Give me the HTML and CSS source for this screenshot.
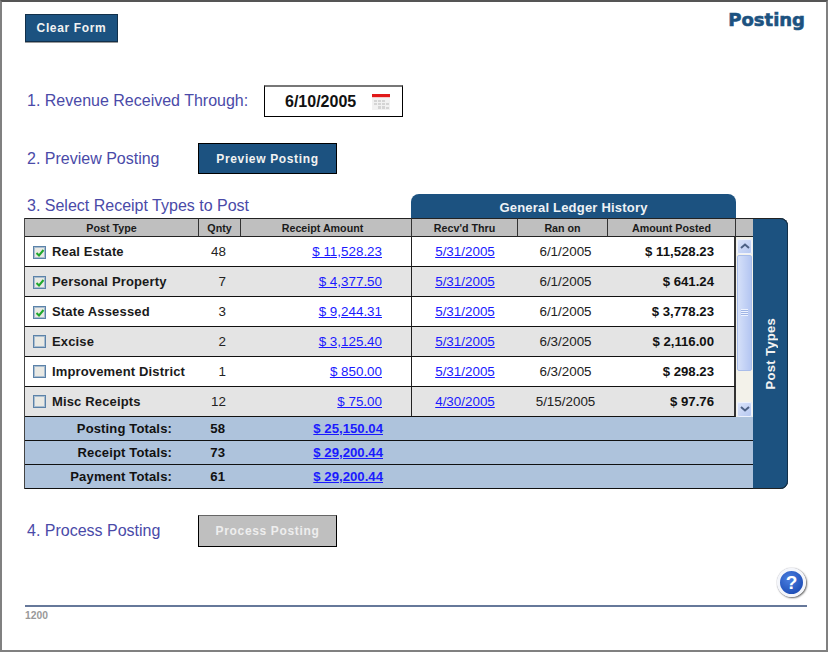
FILE: index.html
```html
<!DOCTYPE html>
<html lang="en">
<head>
    <meta charset="UTF-8">
    <title>Posting</title>
    <link rel="stylesheet" href="styles.css">
</head>
<body>
<div class="frame">
    <div class="topbar">
        <button class="btn btn-clear">Clear Form</button>
        <h1 class="page-title">Posting</h1>
    </div>

    <div class="step step-1">
        <div class="step-label label-wide">1. Revenue Received Through:</div>
        <div class="date-box">
            <span class="date-value">6/10/2005</span>
            <svg class="cal-icon" width="18" height="16" viewBox="0 0 18 16">
                <rect x="0" y="0" width="18" height="16" fill="#f1f1f1"/>
                <rect x="0" y="0" width="18" height="3" fill="#e01818"/>
                <rect x="0" y="3" width="18" height="1" fill="#f8c8c8"/>
                <g fill="#d4d4d4">
                    <rect x="2" y="6" width="3" height="2"/>
                    <rect x="6" y="6" width="3" height="2"/>
                    <rect x="10" y="6" width="3" height="2"/>
                    <rect x="2" y="9" width="3" height="2"/>
                    <rect x="6" y="9" width="3" height="2"/>
                    <rect x="10" y="9" width="3" height="2"/>
                    <rect x="14" y="9" width="3" height="2"/>
                    <rect x="6" y="12" width="3" height="3"/>
                    <rect x="10" y="12" width="3" height="3"/>
                    <rect x="14" y="13" width="3" height="2"/>
                </g>
            </svg>
        </div>
    </div>

    <div class="step step-2">
        <div class="step-label">2. Preview Posting</div>
        <button class="btn btn-step">Preview Posting</button>
    </div>

    <div class="step step-3">
        <div class="step-label label-select">3. Select Receipt Types to Post</div>
        <div class="ledger-tab">General Ledger History</div>
    </div>

    <div class="grid-wrap">
        <table class="posting-table">
            <colgroup>
                <col class="c-type"><col class="c-qnty"><col class="c-amount">
                <col class="c-recv"><col class="c-ran"><col class="c-posted"><col class="c-scroll">
            </colgroup>
            <thead>
                <tr>
                    <th>Post Type</th>
                    <th>Qnty</th>
                    <th class="th-amount">Receipt Amount</th>
                    <th>Recv'd Thru</th>
                    <th>Ran on</th>
                    <th>Amount Posted</th>
                    <th class="th-scroll"></th>
                </tr>
            </thead>
            <tbody>
                <tr>
                    <td class="type"><span class="check on"><svg width="10" height="10" viewBox="0 0 10 10"><path d="M1.5 5 L4 7.5 L8.5 2" fill="none" stroke="#1fa82c" stroke-width="2"/></svg></span>Real Estate</td>
                    <td class="qnty">48</td>
                    <td class="amount"><a href="#">$ 11,528.23</a></td>
                    <td class="recv"><a href="#">5/31/2005</a></td>
                    <td class="ran">6/1/2005</td>
                    <td class="posted">$ 11,528.23</td>
                    <td class="scroll-cell" rowspan="6">
                        <div class="scrollbar">
                            <div class="sb-btn"><svg width="10" height="6" viewBox="0 0 10 6"><path d="M1 5 L5 1.5 L9 5" fill="none" stroke="#4d6185" stroke-width="2"/></svg></div>
                            <div class="sb-thumb"><span class="sb-grip"></span></div>
                            <div class="sb-track"></div>
                            <div class="sb-btn"><svg width="10" height="6" viewBox="0 0 10 6"><path d="M1 1 L5 4.5 L9 1" fill="none" stroke="#4d6185" stroke-width="2"/></svg></div>
                        </div>
                    </td>
                </tr>
                <tr class="alt">
                    <td class="type"><span class="check on"><svg width="10" height="10" viewBox="0 0 10 10"><path d="M1.5 5 L4 7.5 L8.5 2" fill="none" stroke="#1fa82c" stroke-width="2"/></svg></span>Personal Property</td>
                    <td class="qnty">7</td>
                    <td class="amount"><a href="#">$ 4,377.50</a></td>
                    <td class="recv"><a href="#">5/31/2005</a></td>
                    <td class="ran">6/1/2005</td>
                    <td class="posted">$ 641.24</td>
                </tr>
                <tr>
                    <td class="type"><span class="check on"><svg width="10" height="10" viewBox="0 0 10 10"><path d="M1.5 5 L4 7.5 L8.5 2" fill="none" stroke="#1fa82c" stroke-width="2"/></svg></span>State Assessed</td>
                    <td class="qnty">3</td>
                    <td class="amount"><a href="#">$ 9,244.31</a></td>
                    <td class="recv"><a href="#">5/31/2005</a></td>
                    <td class="ran">6/1/2005</td>
                    <td class="posted">$ 3,778.23</td>
                </tr>
                <tr class="alt">
                    <td class="type"><span class="check"></span>Excise</td>
                    <td class="qnty">2</td>
                    <td class="amount"><a href="#">$ 3,125.40</a></td>
                    <td class="recv"><a href="#">5/31/2005</a></td>
                    <td class="ran">6/3/2005</td>
                    <td class="posted">$ 2,116.00</td>
                </tr>
                <tr>
                    <td class="type"><span class="check"></span>Improvement District</td>
                    <td class="qnty">1</td>
                    <td class="amount"><a href="#">$ 850.00</a></td>
                    <td class="recv"><a href="#">5/31/2005</a></td>
                    <td class="ran">6/3/2005</td>
                    <td class="posted">$ 298.23</td>
                </tr>
                <tr class="alt">
                    <td class="type"><span class="check"></span>Misc Receipts</td>
                    <td class="qnty">12</td>
                    <td class="amount"><a href="#">$ 75.00</a></td>
                    <td class="recv"><a href="#">4/30/2005</a></td>
                    <td class="ran">5/15/2005</td>
                    <td class="posted">$ 97.76</td>
                </tr>
            </tbody>
            <tfoot>
                <tr>
                    <td class="total-label">Posting Totals:</td>
                    <td class="total-qnty">58</td>
                    <td class="total-amount"><a href="#">$ 25,150.04</a></td>
                    <td colspan="4"></td>
                </tr>
                <tr>
                    <td class="total-label">Receipt Totals:</td>
                    <td class="total-qnty">73</td>
                    <td class="total-amount"><a href="#">$ 29,200.44</a></td>
                    <td colspan="4"></td>
                </tr>
                <tr>
                    <td class="total-label">Payment Totals:</td>
                    <td class="total-qnty">61</td>
                    <td class="total-amount"><a href="#">$ 29,200.44</a></td>
                    <td colspan="4"></td>
                </tr>
            </tfoot>
        </table>
        <div class="side-tab"><span>Post Types</span></div>
    </div>

    <div class="step step-4">
        <div class="step-label">4. Process Posting</div>
        <button class="btn btn-step btn-off">Process Posting</button>
    </div>

    <div class="help-row">
        <div class="help">?</div>
    </div>
    <div class="footer">1200</div>
</div>
</body>
</html>
```

FILE: styles.css
```css
body {
    margin: 0;
    font-family: "Liberation Sans", Arial, sans-serif;
    background: #fff;
}

.frame {
    box-sizing: border-box;
    width: 828px;
    height: 652px;
    padding: 12px 19px 0 22px;
    border: 2px solid #808080;
    border-top-color: #555;
    background: #fff;
    overflow: hidden;
}

.topbar {
    display: flex;
    justify-content: space-between;
    align-items: flex-start;
    height: 28px;
    margin-left: 1px;
}

.page-title {
    margin: -5px 2px 0 0;
    font-family: "DejaVu Sans", Verdana, sans-serif;
    font-size: 18px;
    font-weight: bold;
    color: #1c5280;
    -webkit-text-stroke: 0.6px #1c5280;
}

.btn {
    box-sizing: border-box;
    border: 1px solid #000;
    border-radius: 0;
    padding: 0;
    background: #1c5280;
    color: #f2f2f2;
    font-family: "Liberation Sans", Arial, sans-serif;
    font-size: 12px;
    font-weight: bold;
    letter-spacing: 0.65px;
}

.btn-clear {
    width: 93px;
    height: 28px;
    border-color: #12304a;
    box-shadow: 0 1px 0 #999;
}

.btn-step {
    width: 139px;
    height: 31px;
}

.btn-off {
    height: 32px;
    background: #bfbfbf;
    color: #eee;
    border-top-color: #666;
}

.step {
    display: flex;
    align-items: center;
}

.step-1 {
    margin-top: 43px;
    height: 32px;
}

.step-2 {
    margin-top: 26px;
    height: 31px;
}

.step-3 {
    margin-top: 20px;
    height: 24px;
    align-items: flex-end;
}

.step-4 {
    margin-top: 26px;
    height: 32px;
}

.step-label {
    width: 171px;
    margin-left: 3px;
    font-size: 16px;
    color: #4a4aa8;
    white-space: nowrap;
}

.label-wide {
    width: 237px;
}

.label-select {
    width: 384px;
    height: 24px;
    line-height: 23px;
}

.date-box {
    box-sizing: border-box;
    display: flex;
    align-items: center;
    width: 139px;
    height: 32px;
    padding-left: 20px;
    border: 1px solid #000;
    border-top: 2px solid #777;
}

.date-value {
    width: 87px;
    font-size: 16px;
    font-weight: bold;
    color: #111;
}

.cal-icon {
    display: block;
}

.ledger-tab {
    box-sizing: border-box;
    width: 325px;
    height: 24px;
    padding-top: 1px;
    border-radius: 8px 8px 0 0;
    background: #1c5280;
    color: #eef2f6;
    font-size: 13px;
    font-weight: bold;
    line-height: 25px;
    letter-spacing: 0.2px;
    text-align: center;
}

.grid-wrap {
    display: flex;
    align-items: stretch;
    width: 764px;
}

.posting-table {
    width: 729px;
    table-layout: fixed;
    border-collapse: separate;
    border-spacing: 0;
    border-left: 1px solid #444;
}

.c-type { width: 174px; }
.c-qnty { width: 42px; }
.c-amount { width: 171px; }
.c-recv { width: 106px; }
.c-ran { width: 90px; }
.c-posted { width: 128px; }
.c-scroll { width: 17px; }

.posting-table th {
    height: 17px;
    padding: 0;
    background: #bfbfbf;
    border-top: 1px solid #222;
    border-bottom: 1px solid #222;
    border-right: 1px solid #333;
    font-size: 10.7px;
    font-weight: bold;
    color: #1a1a1a;
    text-align: center;
}

.posting-table th.th-amount {
    padding-right: 7px;
}

.posting-table th.th-scroll {
    border-right: 0;
}

.posting-table tbody td {
    height: 29px;
    padding: 0;
    border-bottom: 1px solid #111;
    font-size: 13.4px;
    color: #222;
    background: #fff;
    white-space: nowrap;
}

.posting-table tbody .alt td {
    background: #e4e4e4;
}

.posting-table tbody td.type {
    padding-left: 8px;
    font-size: 13px;
    font-weight: bold;
    color: #1a1a1a;
    letter-spacing: 0.15px;
}

.posting-table tbody td.qnty {
    padding-right: 15px;
    text-align: right;
}

.posting-table tbody td.ran {
    padding-left: 5px;
    text-align: center;
}

.posting-table tbody td.amount {
    padding-right: 29px;
    text-align: right;
    border-right: 1px solid #222;
}

.posting-table tbody td.recv {
    text-align: center;
}

.posting-table tbody td.posted {
    padding-right: 20px;
    font-size: 13.2px;
    font-weight: bold;
    color: #111;
    text-align: right;
    border-right: 2px solid #333;
}

a {
    color: #1a1aff;
}

.check {
    box-sizing: border-box;
    display: inline-flex;
    align-items: center;
    justify-content: center;
    width: 13px;
    height: 13px;
    margin-right: 6px;
    vertical-align: -2px;
    border: 1px solid #5b82a8;
    box-shadow: inset 0 0 0 1px #a9bdd0;
    background: #e9e9e4;
}

.posting-table tbody td.scroll-cell {
    padding: 0;
    border-bottom: 0;
    background: #f3f2ea;
}

.scrollbar {
    display: flex;
    flex-direction: column;
    height: 178px;
    margin: 1px 0 0 1px;
}

.sb-btn {
    display: flex;
    flex: none;
    align-items: center;
    justify-content: center;
    width: 15px;
    height: 15px;
    border-radius: 2px;
    background: linear-gradient(135deg, #dde6fb, #b4c6f0);
    box-shadow: inset 0 0 0 1px #eef2fd;
}

.sb-thumb {
    display: flex;
    flex: none;
    align-items: center;
    justify-content: center;
    box-sizing: border-box;
    width: 15px;
    height: 116px;
    margin-top: 1px;
    border: 1px solid #a9bdea;
    border-radius: 2px;
    background: linear-gradient(90deg, #d5e0f9, #b4c6f2);
}

.sb-grip {
    width: 7px;
    height: 7px;
    background: repeating-linear-gradient(180deg, #eef3ff 0 1px, #9fb4e4 1px 2px);
}

.sb-track {
    flex: 1;
}

.posting-table tfoot td {
    height: 23px;
    padding: 0;
    background: #aec3dc;
    border-bottom: 1px solid #111;
    font-size: 13.2px;
    font-weight: bold;
    color: #111;
}

.posting-table tfoot td.total-label {
    padding-right: 27px;
    font-size: 13px;
    text-align: right;
    letter-spacing: 0.15px;
}

.posting-table tfoot td.total-qnty {
    padding-right: 16px;
    text-align: right;
}

.posting-table tfoot td.total-amount {
    padding-right: 29px;
    text-align: right;
}

.side-tab {
    display: flex;
    align-items: center;
    justify-content: center;
    width: 35px;
    border-radius: 0 8px 8px 0;
    background: #1c5280;
    box-shadow: inset -1px 0 0 #12304a, inset 0 1px 0 #222, inset 0 -1px 0 #222;
    color: #f2f2f2;
    font-size: 13px;
    font-weight: bold;
    letter-spacing: 0.3px;
}

.side-tab span {
    writing-mode: vertical-rl;
    transform: rotate(180deg);
}

.help-row {
    display: flex;
    justify-content: flex-end;
    height: 32px;
    margin-top: 21px;
    padding-right: 1px;
}

.help {
    box-sizing: border-box;
    width: 29px;
    height: 29px;
    border: 3px solid #f4f6fb;
    border-radius: 50%;
    background: radial-gradient(circle at 40% 35%, #4b7fe0, #1f4fb8 75%);
    box-shadow: 1px 1px 2px #666, 0 0 1px #889;
    color: #fff;
    font-size: 19px;
    font-weight: bold;
    line-height: 23px;
    text-align: center;
}

.footer {
    margin-top: 5px;
    margin-left: 1px;
    padding-top: 2px;
    border-top: 2px solid #66789a;
    font-size: 10.3px;
    font-weight: bold;
    color: #999;
    line-height: 14px;
}
```
